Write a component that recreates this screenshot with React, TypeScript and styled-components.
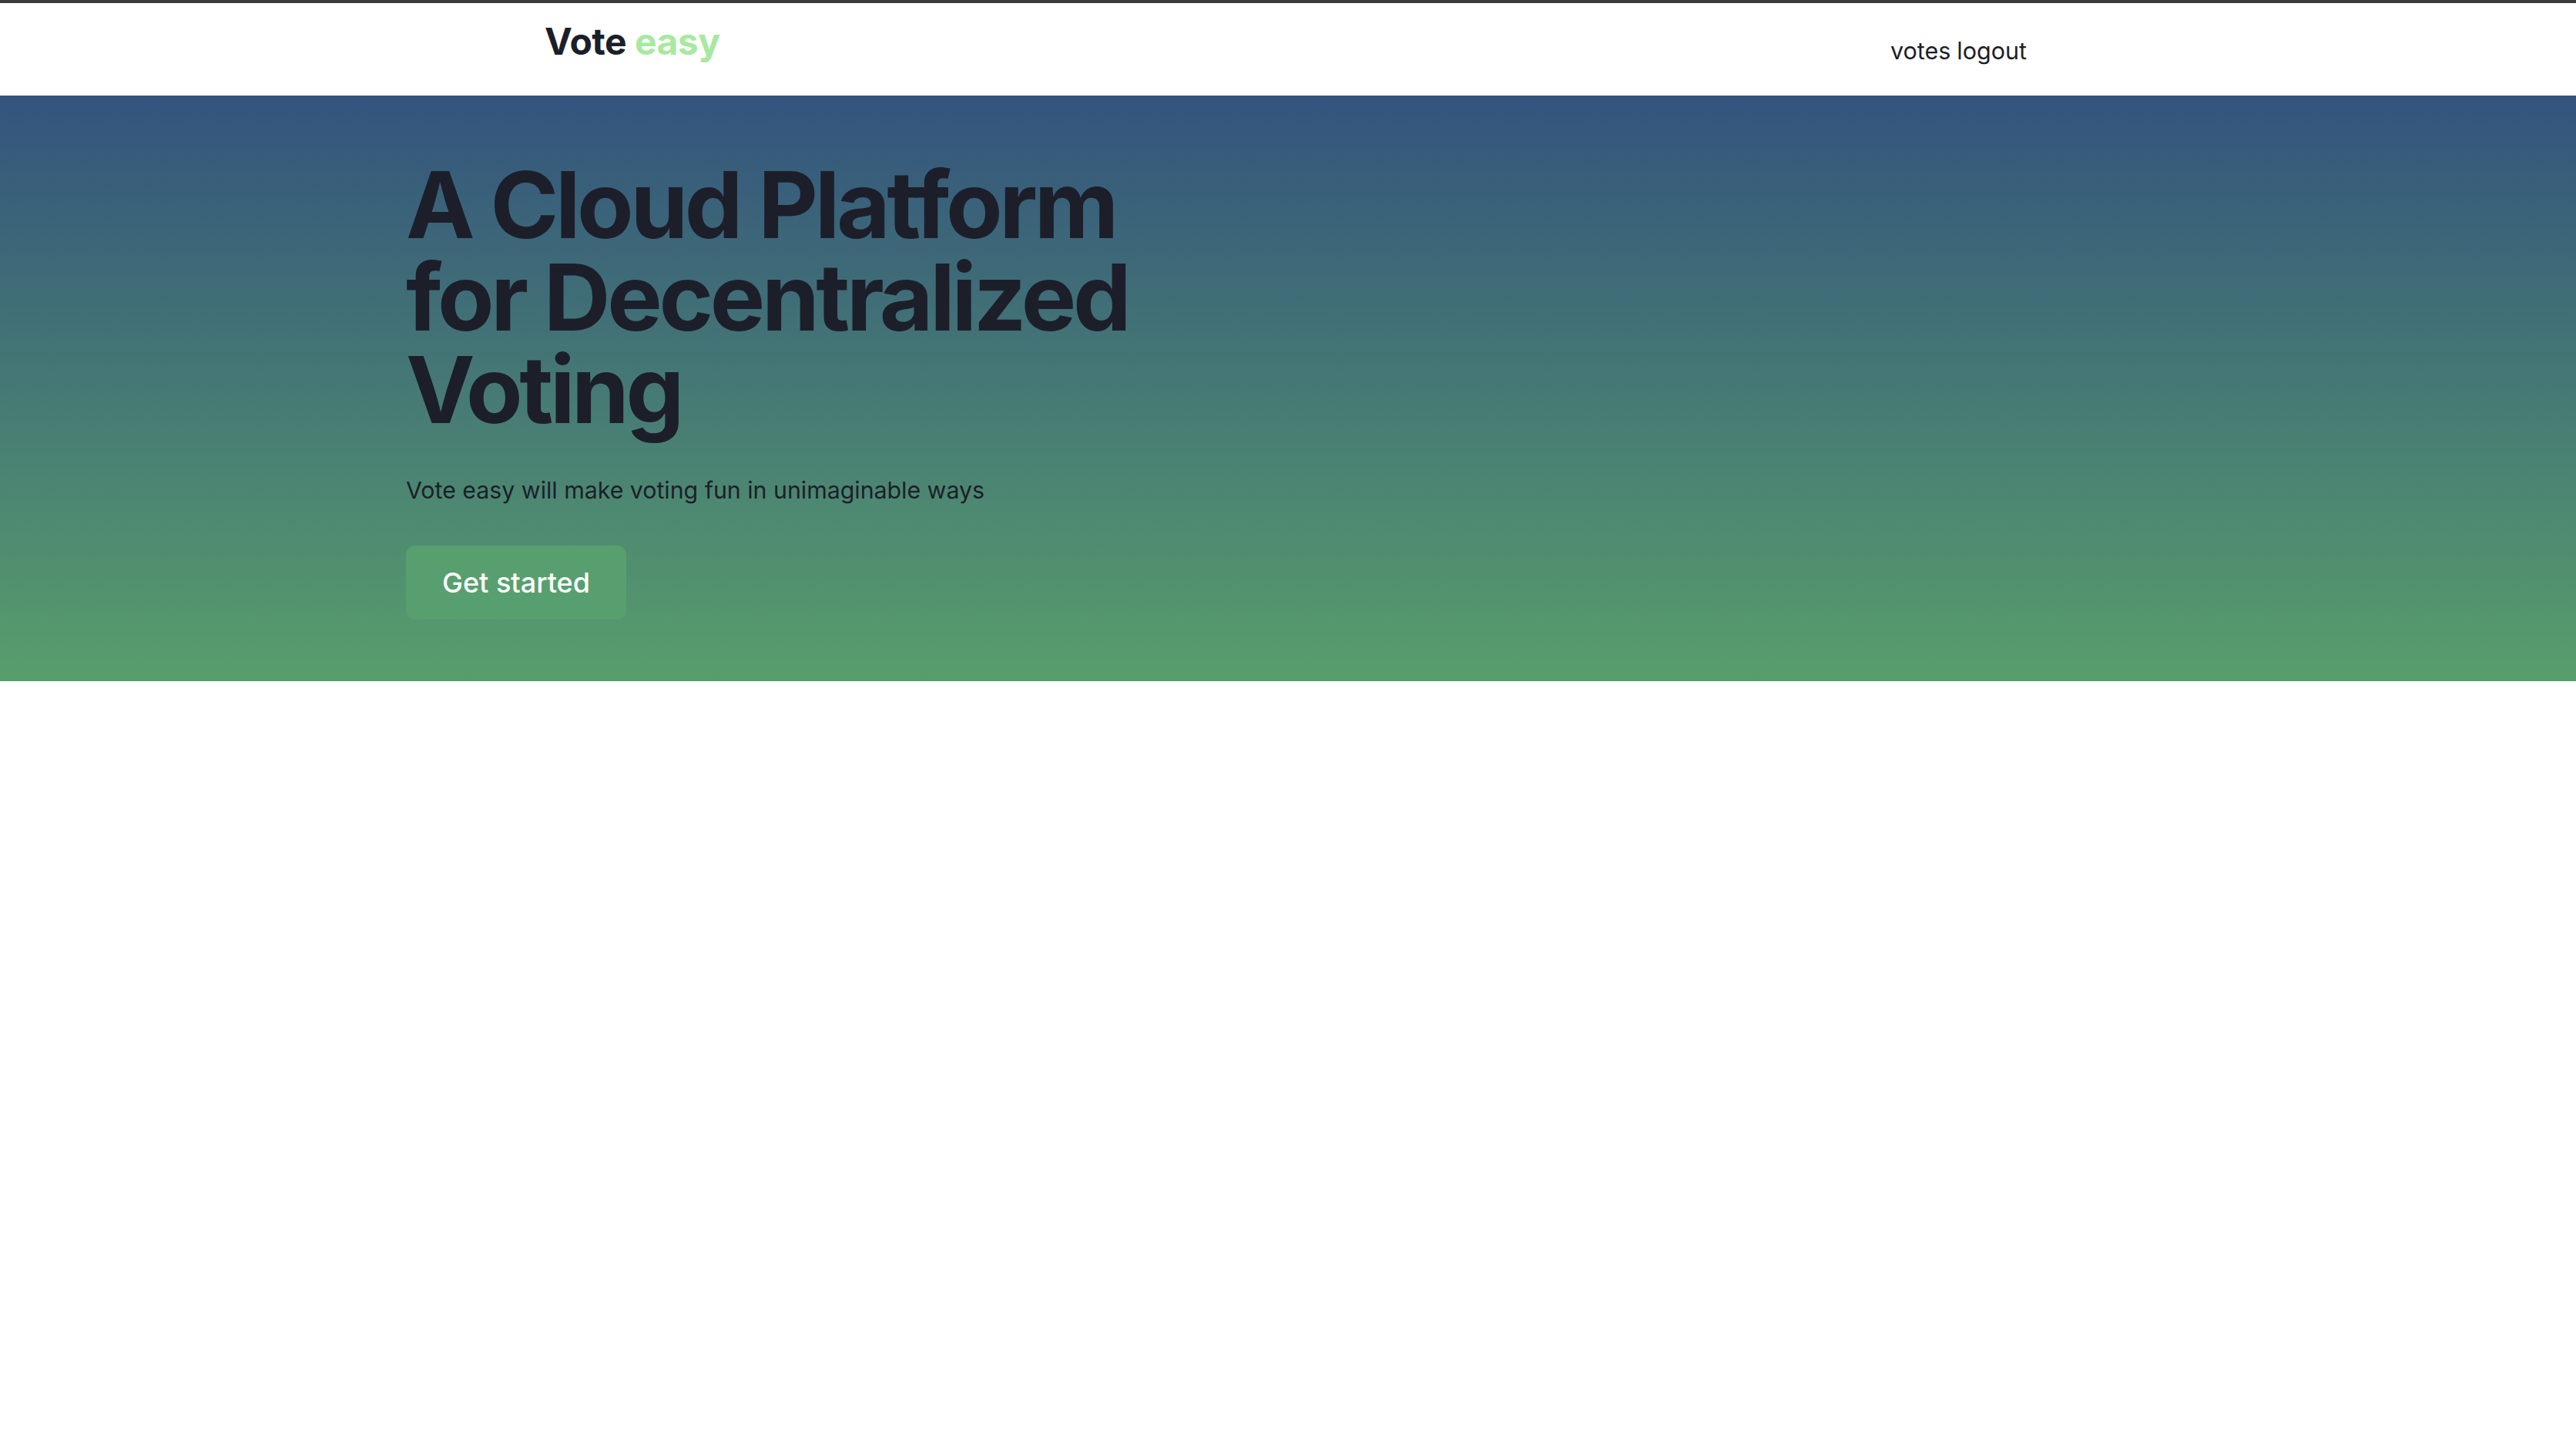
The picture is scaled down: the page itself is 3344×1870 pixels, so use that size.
import React from "react";
import styled, { createGlobalStyle } from "styled-components";

const GlobalStyle = createGlobalStyle`
  html, body {
    margin: 0;
    padding: 0;
    background: #ffffff;
    font-family: Inter, "Noto Sans", "Liberation Sans", sans-serif;
    color: #1c1f2a;
  }
  * { box-sizing: border-box; }
`;

const Page = styled.div`
  min-height: 1870px;
  background: #ffffff;
`;

const Header = styled.header`
  height: 124px;
  border-top: 4px solid #3b3b3d;
  background: #ffffff;
`;

const HeaderInner = styled.div`
  max-width: 1930px;
  height: 100%;
  margin: 0 auto;
  padding-right: 6px;
  display: flex;
  align-items: center;
  justify-content: space-between;
`;

const Logo = styled.div`
  font-size: 48px;
  line-height: 48px;
  font-weight: 700;
  letter-spacing: -0.5px;
  color: #1c1f2a;
  margin-bottom: 21px;
`;

const LogoAccent = styled.span`
  color: #a7e9a1;
`;

const Nav = styled.nav`
  display: flex;
  gap: 8px;
  margin-top: 4px;
  font-size: 30.5px;
  line-height: 48px;
  color: #1c1f2a;
`;

const NavLink = styled.a`
  color: inherit;
  text-decoration: none;
  cursor: pointer;
`;

const Hero = styled.section`
  background: linear-gradient(180deg, #33547d 0%, #589e6c 100%);
  padding: 82px 0 80px 527px;
`;

const Title = styled.h1`
  margin: 0;
  max-width: 1000px;
  font-size: 120px;
  line-height: 120px;
  font-weight: 700;
  letter-spacing: -4.3px;
  color: #1c1f2a;
`;

const Subtitle = styled.p`
  margin: 46px 0 0;
  font-size: 30.3px;
  line-height: 48px;
  color: #1c1f2a;
`;

const CtaButton = styled.button`
  margin-top: 48px;
  display: inline-block;
  padding: 20px 47px;
  border: none;
  border-radius: 12px;
  background: #589f6f;
  color: #ffffff;
  font-family: inherit;
  font-size: 36px;
  line-height: 56px;
  font-weight: 500;
  cursor: pointer;
`;

export default function App() {
  return (
    <Page>
      <GlobalStyle />
      <Header>
        <HeaderInner>
          <Logo>
            Vote <LogoAccent>easy</LogoAccent>
          </Logo>
          <Nav>
            <NavLink>votes</NavLink>
            <NavLink>logout</NavLink>
          </Nav>
        </HeaderInner>
      </Header>
      <Hero>
        <Title>A Cloud Platform for Decentralized Voting</Title>
        <Subtitle>Vote easy will make voting fun in unimaginable ways</Subtitle>
        <CtaButton>Get started</CtaButton>
      </Hero>
    </Page>
  );
}
